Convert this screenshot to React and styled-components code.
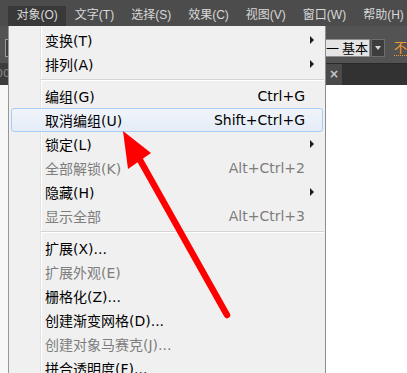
import React from 'react';
import styled, { createGlobalStyle } from 'styled-components';

const menuTitles = ['对象(O)', '文字(T)', '选择(S)', '效果(C)', '视图(V)', '窗口(W)', '帮助(H)'];

const items = [
  { label: '变换(T)', sub: true },
  { label: '排列(A)', sub: true },
  { sep: true },
  { label: '编组(G)', keys: 'Ctrl+G' },
  { label: '取消编组(U)', keys: 'Shift+Ctrl+G', active: true },
  { label: '锁定(L)', sub: true },
  { label: '全部解锁(K)', keys: 'Alt+Ctrl+2', disabled: true },
  { label: '隐藏(H)', sub: true },
  { label: '显示全部', keys: 'Alt+Ctrl+3', disabled: true },
  { sep: true },
  { label: '扩展(X)...' },
  { label: '扩展外观(E)', disabled: true },
  { label: '栅格化(Z)...' },
  { label: '创建渐变网格(D)...' },
  { label: '创建对象马赛克(J)...', disabled: true },
  { label: '拼合透明度(F)...' },
];

const App = () => {
  return (
    <StPage>
      <GlobalStyle />
      <StMenuBar>
        {menuTitles.map((t, i) => (
          <StBarItem key={t} $open={i === 0}>
            {t}
          </StBarItem>
        ))}
      </StMenuBar>

      <StBody>
        <StLeftStrip>
          <StStripTool>
            <StStripBox />
          </StStripTool>
          <StStripTabs>00</StStripTabs>
        </StLeftStrip>

        {/* dropdown */}
        <StMenu>
          {items.map((it, i) =>
            it.sep ? (
              <StSep key={i} />
            ) : (
              <StRow key={i} $active={it.active} $disabled={it.disabled}>
                <span>{it.label}</span>
                <StKeys>{it.keys}</StKeys>
                <StArrowCell>{it.sub && <StSubArrow />}</StArrowCell>
              </StRow>
            )
          )}
        </StMenu>

        <StRight>
          <StToolbar>
            <StCombo>一 基本</StCombo>
            <StComboBtn>
              <StDownTri />
            </StComboBtn>
            <StOrange>不</StOrange>
          </StToolbar>
          <StTabBar>
            <StTab>×</StTab>
          </StTabBar>
          <StCanvas />
        </StRight>
      </StBody>

      <StPointer width="407" height="373" viewBox="0 0 407 373">
        <line x1="140" y1="160" x2="227" y2="315" stroke="#ff0000" strokeWidth="6.5" strokeLinecap="round" />
        <polygon points="123,131 128,169 151,153" fill="#ff0000" />
      </StPointer>
    </StPage>
  );
};

export default App;

const GlobalStyle = createGlobalStyle`
  body {
    margin: 0;
    background: #ffffff;
    overflow: hidden;
  }
`;

const StPage = styled.div`
  position: relative;
  width: 407px;
  height: 373px;
  overflow: hidden;
  font-family: 'DejaVu Sans', 'Noto Sans CJK SC', sans-serif;
`;

const StMenuBar = styled.div`
  height: 26px;
  background: #4c4c4c;
  display: flex;
  align-items: flex-end;
  padding-left: 8px;
  white-space: nowrap;
`;

const StBarItem = styled.div`
  height: 20px;
  line-height: 19px;
  padding: 0 8.5px;
  font-family: 'Liberation Sans', 'Noto Sans CJK SC', sans-serif;
  font-size: 12px;
  color: #d8d8d8;
  background: ${(p) => (p.$open ? '#393939' : 'transparent')};
`;

const StBody = styled.div`
  display: flex;
  height: 347px;
`;

const StLeftStrip = styled.div`
  width: 8px;
  display: flex;
  flex-direction: column;
  background: #f7f7f7;
`;

const StStripTool = styled.div`
  height: 37px;
  background: #535353;
  padding-top: 13px;
  box-sizing: border-box;
`;

const StStripBox = styled.div`
  margin-left: 5px;
  width: 3px;
  height: 18px;
  box-sizing: border-box;
  border: 1px solid #9a9a9a;
  border-right: none;
  background: #3e3e3e;
`;

const StStripTabs = styled.div`
  height: 22px;
  background: #3c3c3c;
  color: #8a8a8a;
  font-size: 11px;
  line-height: 22px;
  text-indent: -4px;
  overflow: hidden;
`;

const StMenu = styled.div`
  width: 321px;
  box-sizing: border-box;
  border-left: 1px solid #979797;
  border-right: 1px solid #8c8c8c;
  padding-top: 2px;
  background:
    linear-gradient(90deg, transparent 31px, #e2e2e2 31px, #e2e2e2 32px, #ffffff 32px, #ffffff 33px, transparent 33px),
    #f0f0f0;
`;

const StRow = styled.div`
  height: 24px;
  margin: 0 2px;
  box-sizing: border-box;
  border: 1px solid ${(p) => (p.$active ? '#a9ccf3' : 'transparent')};
  border-radius: 3px;
  background: ${(p) => (p.$active ? 'linear-gradient(#f1f5fb, #e4ecf7)' : 'transparent')};
  display: grid;
  grid-template-columns: 1fr auto 17px;
  align-items: center;
  padding-left: 33px;
  font-size: 14px;
  color: ${(p) => (p.$disabled ? '#7d7d7d' : '#000000')};
  white-space: nowrap;
`;

const StKeys = styled.span`
  font-family: 'DejaVu Sans', sans-serif;
  font-size: 14px;
`;

const StArrowCell = styled.span`
  display: flex;
  align-items: center;
  padding-left: 5px;
`;

const StSubArrow = styled.span`
  width: 0;
  height: 0;
  border-left: 4px solid #1e1e1e;
  border-top: 4px solid transparent;
  border-bottom: 4px solid transparent;
`;

const StSep = styled.div`
  height: 8px;
  margin-left: 32px;
  margin-right: 1px;
  display: flex;
  flex-direction: column;
  justify-content: center;

  &::before {
    content: '';
    height: 1px;
    background: #d5d5d5;
  }
  &::after {
    content: '';
    height: 1px;
    background: #ffffff;
  }
`;

const StRight = styled.div`
  flex: 1;
  display: flex;
  flex-direction: column;
`;

const StToolbar = styled.div`
  height: 37px;
  box-sizing: border-box;
  background: #535353;
  padding-top: 13px;
  display: flex;
  align-items: flex-start;
  white-space: nowrap;
`;

const StCombo = styled.div`
  width: 44px;
  height: 18px;
  box-sizing: border-box;
  background: #e4e4e4;
  border: 1px solid #8e8e8e;
  border-left: none;
  font-family: 'Noto Sans CJK SC', sans-serif;
  font-size: 13px;
  line-height: 16px;
  color: #000000;
  text-align: right;
  padding-right: 2px;
`;

const StComboBtn = styled.div`
  width: 14px;
  height: 18px;
  margin-left: 1px;
  box-sizing: border-box;
  background: #3d3d3d;
  border: 1px solid #6e6e6e;
  display: flex;
  align-items: center;
  justify-content: center;
`;

const StDownTri = styled.span`
  width: 0;
  height: 0;
  border-top: 4px solid #d8d8d8;
  border-left: 3.5px solid transparent;
  border-right: 3.5px solid transparent;
`;

const StOrange = styled.div`
  margin-left: 9px;
  font-family: 'Noto Sans CJK SC', sans-serif;
  font-size: 13px;
  line-height: 16px;
  color: #f29b2f;
  border-bottom: 1px dotted #f29b2f;
`;

const StTabBar = styled.div`
  height: 22px;
  background: #323232;
  border-top: 1px solid #2a2a2a;
  box-sizing: border-box;
  display: flex;
`;

const StTab = styled.div`
  width: 16px;
  background: #4a4a4a;
  color: #c8c8c8;
  font-size: 12px;
  font-weight: bold;
  line-height: 20px;
  text-align: center;
`;

const StCanvas = styled.div`
  flex: 1;
  background: #ffffff;
`;

const StPointer = styled.svg`
  position: absolute;
  left: 0;
  top: 0;
  pointer-events: none;
`;
